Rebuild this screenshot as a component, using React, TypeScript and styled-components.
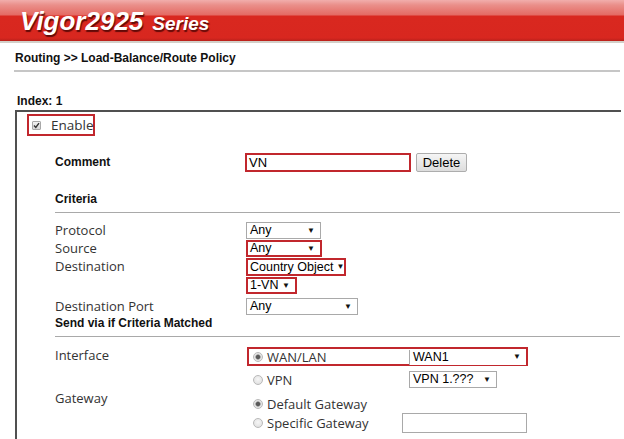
import React from 'react';
import styled, { createGlobalStyle } from 'styled-components';

const RED = '#c1272d';
const LABEL_FONT = "'Open Sans', 'Noto Sans', sans-serif";
const UI_FONT = "'Liberation Sans', Arial, sans-serif";

const GlobalStyle = createGlobalStyle`
  html, body {
    margin: 0;
    padding: 0;
    background: #fff;
  }
  body {
    width: 624px;
    height: 439px;
    overflow: hidden;
    font-family: ${UI_FONT};
  }
`;

const Header = styled.header`
  box-sizing: border-box;
  height: 43px;
  padding: 8px 0 0 20px;
  border-bottom: 2px solid #d2cfc8;
  background: linear-gradient(
    to bottom,
    #f1aeac 0px,
    #ea8f8a 5px,
    #e46a63 15px,
    #d9281f 16px,
    #d8271f 38px,
    #b9201a 41px
  );
  white-space: nowrap;
`;

const Brand = styled.span`
  font: italic bold 26px/26px ${UI_FONT};
  color: #fff;
  text-shadow: 1px 2px 1px rgba(60, 0, 0, 0.75);
`;

const BrandSeries = styled.span`
  margin-left: 9px;
  font-size: 19px;
`;

const Breadcrumb = styled.div`
  margin: 0 4px 0 14px;
  padding: 8px 0 5px 1px;
  font: bold 12px/14px ${UI_FONT};
  color: #111;
  border-bottom: 2px solid #c6c6c6;
`;

const IndexTitle = styled.div`
  margin: 22px 0 0 17px;
  font: bold 12px/14px ${UI_FONT};
  color: #111;
`;

const Panel = styled.section`
  margin: 2px 3px 0 15px;
  padding-bottom: 12px;
  border-top: 2px solid #505050;
  border-left: 2px solid #505050;
`;

const EnableFrame = styled.label`
  box-sizing: border-box;
  display: flex;
  align-items: center;
  gap: 10px;
  width: 68px;
  height: 22px;
  margin: 2px 0 0 10px;
  padding-left: 3px;
  border: 2px solid ${RED};
  font: 13.5px/16px ${LABEL_FONT};
  color: #333;
`;

const CheckBox = styled.span`
  box-sizing: border-box;
  display: inline-flex;
  align-items: center;
  justify-content: center;
  width: 9px;
  height: 9px;
  border: 1px solid #a8a8a8;
  border-radius: 1px;
  background: linear-gradient(#f2f2f2, #d6d6d6);
`;

const Content = styled.div`
  padding-left: 38px;
`;

const FieldRow = styled.div<{ $top?: number }>`
  display: grid;
  grid-template-columns: 191px 1fr;
  align-items: start;
  margin-top: ${p => p.$top ?? 0}px;
`;

const Label = styled.div<{ $bold?: boolean; $shift?: number }>`
  margin-top: ${p => p.$shift ?? 0}px;
  font: ${p => (p.$bold ? `bold 12px/19px ${UI_FONT}` : `13px/16px ${LABEL_FONT}`)};
  color: ${p => (p.$bold ? '#111' : '#333')};
`;

const SectionHeading = styled.div<{ $top: number }>`
  margin-right: 1px;
  padding: ${p => p.$top}px 0 6px 0;
  font: bold 12px/14px ${UI_FONT};
  color: #111;
  border-bottom: 1px solid #a9a9a9;
`;

const Controls = styled.div`
  display: flex;
  align-items: center;
  gap: 5px;
  margin-left: -1px;
`;

const TextInput = styled.div<{ $width: number; $highlight?: boolean; $height: number }>`
  box-sizing: border-box;
  width: ${p => p.$width}px;
  height: ${p => p.$height}px;
  padding-left: 2px;
  border: ${p => (p.$highlight ? `2px solid ${RED}` : '1px solid #a9a9a9')};
  font: 13px/15px ${UI_FONT};
  color: #000;
  background: #fff;
`;

const Button = styled.button`
  box-sizing: border-box;
  width: 51px;
  height: 19px;
  padding: 0;
  border: 1px solid #adadad;
  border-radius: 2px;
  background: linear-gradient(#f5f5f5, #dddddd);
  font: 13px/17px ${UI_FONT};
  color: #000;
`;

const SelectBox = styled.div<{ $width: number; $highlight?: boolean; $height?: number; $bare?: boolean }>`
  box-sizing: border-box;
  display: flex;
  align-items: center;
  justify-content: space-between;
  width: ${p => p.$width}px;
  height: ${p => p.$height ?? 16}px;
  padding: 0 5px 0 ${p => (p.$highlight ? 2 : 3)}px;
  border: ${p => (p.$highlight ? `2px solid ${RED}` : '1px solid #a9a9a9')};
  ${p => (p.$bare ? 'border-width: 0 0 0 1px;' : '')}
  font: 12.5px/1 ${UI_FONT};
  color: #000;
  background: #fff;
  white-space: nowrap;
`;

const Caret = styled.span`
  margin-left: 3px;
  font-size: 8px;
  line-height: 1;
  color: #111;
`;

const Stack = styled.div<{ $gap: number }>`
  display: flex;
  flex-direction: column;
  align-items: flex-start;
  gap: ${p => p.$gap}px;
`;

const ChoiceRow = styled.div<{ $highlight?: boolean; $col: number; $height: number }>`
  box-sizing: border-box;
  display: grid;
  grid-template-columns: ${p => p.$col}px auto;
  align-items: center;
  height: ${p => p.$height}px;
  margin-left: 1px;
  border: 2px solid ${p => (p.$highlight ? RED : 'transparent')};
`;

const RadioOption = styled.span`
  display: flex;
  align-items: center;
  gap: 4px;
  padding-left: 4px;
  font: 13px/16px ${LABEL_FONT};
  color: #333;
`;

const Radio = styled.span<{ $checked?: boolean }>`
  box-sizing: border-box;
  width: 10px;
  height: 10px;
  border-radius: 50%;
  border: 1px solid #b9b9b9;
  background: ${p =>
    p.$checked
      ? 'radial-gradient(circle, #5a5a5a 0 1.6px, #8a8a8a 2.2px, #e2e2e2 3px, #f2f2f2 100%)'
      : 'radial-gradient(circle at 50% 40%, #f6f6f6 0, #dcdcdc 100%)'};
`;

type SelectProps = {
  value: string;
  width: number;
  highlight?: boolean;
  height?: number;
  bare?: boolean;
};

const Select: React.FC<SelectProps> = ({ value, width, highlight, height, bare }) => (
  <SelectBox $width={width} $highlight={highlight} $height={height} $bare={bare}>
    <span>{value}</span>
    <Caret>▼</Caret>
  </SelectBox>
);

const App: React.FC = () => {
  return (
    <>
      <GlobalStyle />
      <Header>
        <Brand>
          Vigor2925<BrandSeries>Series</BrandSeries>
        </Brand>
      </Header>

      <Breadcrumb>Routing &gt;&gt; Load-Balance/Route Policy</Breadcrumb>
      <IndexTitle>Index: 1</IndexTitle>

      <Panel>
        <EnableFrame>
          <CheckBox>
            <svg width="7" height="7" viewBox="0 0 7 7">
              <path d="M1 3.6 L2.8 5.4 L6 1.2" fill="none" stroke="#333" strokeWidth="1.4" />
            </svg>
          </CheckBox>
          Enable
        </EnableFrame>

        <Content>
          <FieldRow $top={17}>
            <Label $bold>Comment</Label>
            <Controls>
              <TextInput $width={166} $height={19} $highlight>
                VN
              </TextInput>
              <Button type="button">Delete</Button>
            </Controls>
          </FieldRow>

          <SectionHeading $top={20}>Criteria</SectionHeading>

          <FieldRow $top={9}>
            <Label>Protocol</Label>
            <Select value="Any" width={75} height={17} />
          </FieldRow>
          <FieldRow $top={1}>
            <Label>Source</Label>
            <Select value="Any" width={76} height={17} highlight />
          </FieldRow>
          <FieldRow $top={1}>
            <Label>Destination</Label>
            <Stack $gap={1}>
              <Select value="Country Object" width={100} height={18} highlight />
              <Select value="1-VN" width={51} height={17} highlight />
            </Stack>
          </FieldRow>
          <FieldRow $top={4}>
            <Label>Destination Port</Label>
            <Select value="Any" width={112} height={17} />
          </FieldRow>

          <SectionHeading $top={1}>Send via if Criteria Matched</SectionHeading>

          <FieldRow $top={10}>
            <Label>Interface</Label>
            <Stack $gap={3}>
              <ChoiceRow $highlight $col={160} $height={19}>
                <RadioOption>
                  <Radio $checked />
                  WAN/LAN
                </RadioOption>
                <Select value="WAN1" width={117} height={15} bare />
              </ChoiceRow>
              <ChoiceRow $col={160} $height={17}>
                <RadioOption>
                  <Radio />
                  VPN
                </RadioOption>
                <Select value="VPN 1.???" width={88} height={17} />
              </ChoiceRow>
            </Stack>
          </FieldRow>

          <FieldRow $top={8}>
            <Label $shift={-4}>Gateway</Label>
            <Stack $gap={1}>
              <ChoiceRow $col={153} $height={16}>
                <RadioOption>
                  <Radio $checked />
                  Default Gateway
                </RadioOption>
              </ChoiceRow>
              <ChoiceRow $col={153} $height={20}>
                <RadioOption>
                  <Radio />
                  Specific Gateway
                </RadioOption>
                <TextInput $width={125} $height={20} />
              </ChoiceRow>
            </Stack>
          </FieldRow>
        </Content>
      </Panel>
    </>
  );
};

export default App;
